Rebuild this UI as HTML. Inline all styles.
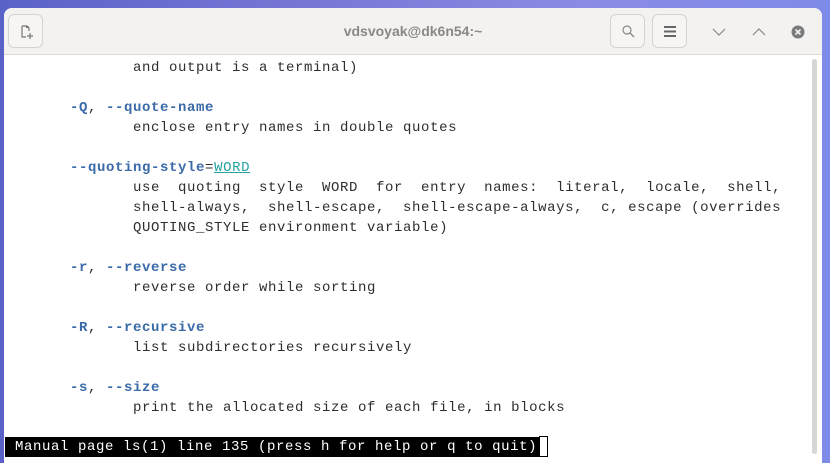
<!DOCTYPE html>
<html><head><style>
*{margin:0;padding:0;box-sizing:border-box}
body{width:830px;height:463px;overflow:hidden;background:linear-gradient(90deg,#5a62c8,#7a78d6 40%,#8a8ae6 70%,#7f8be8);position:relative;font-family:"Liberation Sans",sans-serif}
.win{position:absolute;left:4px;top:8px;width:818px;height:455px;background:#fff;border-radius:8px 8px 0 0;overflow:hidden}
.hdr{position:absolute;left:0;top:0;width:818px;height:47px;background:#f3f2f1;border-bottom:1px solid #dcd8d4}
.btn{position:absolute;top:6px;width:35px;height:34px;border:1px solid #d6d2ce;border-radius:6px;background:#f6f5f4}
.title{position:absolute;left:0;right:0;top:15px;text-align:center;font-size:14px;font-weight:bold;color:#8a8886}
.term{position:absolute;left:3px;top:50px;font-family:"Liberation Mono",monospace;font-size:14px;letter-spacing:0.6px;color:#2e2e2e}
.r{position:absolute;left:0;height:20px;line-height:20px;white-space:pre}
.b{color:#3a6aa8;font-weight:bold}
.w{color:#23a1a0;text-decoration:underline}
.sb{position:absolute;left:808px;top:51px;width:5px;height:395px;background:#d8d6d4;border-radius:3px}
.st{position:absolute;left:1px;top:429px;height:20px;line-height:20px;background:#000;color:#fff;white-space:pre;font-family:"Liberation Mono",monospace;font-size:14px;letter-spacing:0.6px;padding-left:10px;width:534px}
.cur{position:absolute;left:535px;top:428px;width:9px;height:21px;border:1px solid #000;background:#fff}
</style></head><body>
<div class="win">
<div class="hdr">
<div class="btn" style="left:4px"><svg width="35" height="34" viewBox="0 0 35 34"><path d="M13 11h5l2 2v3M13 11v11h4M21 18v6M18 21h6" stroke="#777" stroke-width="1.2" fill="none"/><path d="M17 11h2l1 1v1h-3z" fill="#777"/></svg></div>
<div class="title">vdsvoyak@dk6n54:~</div>
<div class="btn" style="left:606px"><svg width="35" height="34" viewBox="0 0 35 34"><circle cx="16" cy="15" r="4" stroke="#888" stroke-width="1.2" fill="none"/><path d="M19 18l4 4" stroke="#888" stroke-width="1.3"/></svg></div>
<div class="btn" style="left:648px"><svg width="35" height="34" viewBox="0 0 35 34"><path d="M11 12h12M11 16.5h12M11 21h12" stroke="#666" stroke-width="2"/></svg></div>
<svg style="position:absolute;left:704px;top:16px" width="110" height="16"><path d="M5 5l6 6 6-6" stroke="#888" stroke-width="1.2" fill="none"/><path d="M45 11l6-6 6 6" stroke="#888" stroke-width="1.2" fill="none"/><circle cx="90" cy="8" r="6.5" fill="#7a7a7a"/><path d="M87.5 5.5l5 5M92.5 5.5l-5 5" stroke="#eee" stroke-width="1.6"/></svg>
</div>
<div class="term">
<div class="r" style="top:0">              and output is a terminal)</div>
<div class="r" style="top:40px">       <span class="b">-Q</span>, <span class="b">--quote-name</span></div>
<div class="r" style="top:60px">              enclose entry names in double quotes</div>
<div class="r" style="top:100px">       <span class="b">--quoting-style</span>=<span class="w">WORD</span></div>
<div class="r" style="top:120px">              use  quoting  style  WORD  for  entry  names:  literal,  locale,  shell,</div>
<div class="r" style="top:140px">              shell-always,  shell-escape,  shell-escape-always,  c, escape (overrides</div>
<div class="r" style="top:160px">              QUOTING_STYLE environment variable)</div>
<div class="r" style="top:200px">       <span class="b">-r</span>, <span class="b">--reverse</span></div>
<div class="r" style="top:220px">              reverse order while sorting</div>
<div class="r" style="top:260px">       <span class="b">-R</span>, <span class="b">--recursive</span></div>
<div class="r" style="top:280px">              list subdirectories recursively</div>
<div class="r" style="top:320px">       <span class="b">-s</span>, <span class="b">--size</span></div>
<div class="r" style="top:340px">              print the allocated size of each file, in blocks</div>
</div>
<div class="sb"></div>
<div class="st">Manual page ls(1) line 135 (press h for help or q to quit)</div>
<div class="cur"></div>
</div>
</body></html>
